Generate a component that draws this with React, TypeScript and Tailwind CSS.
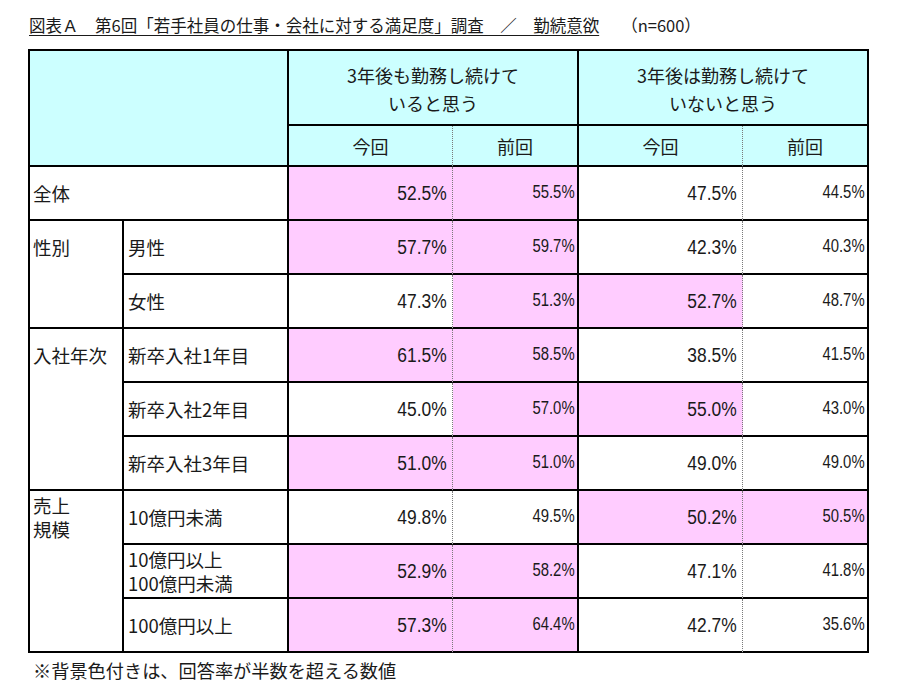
import React from "react";

const jp = "font-['Noto_Sans_CJK_JP',sans-serif]";
const num = "font-['Liberation_Sans',sans-serif]";

const P = true;
const W = false;

function NumCell({ v, pink, kind }: { v: string; pink: boolean; kind: "now" | "prev" }) {
  const bg = pink ? "bg-[#ffccff]" : "bg-white";
  if (kind === "now") {
    return (
      <div className={`${bg} border-b-2 border-b-black border-r border-r-[#7a7a7a] border-dotted [border-bottom-style:solid] flex items-center justify-end pr-[5px]`}>
        <span className={`${num} inline-block origin-right scale-x-[0.87] text-[20px] leading-none text-[#1a1a1a]`}>{v}</span>
      </div>
    );
  }
  return (
    <div className={`${bg} border-b-2 border-r-2 border-black flex items-center justify-end pr-[2px]`}>
      <span className={`${num} inline-block origin-right scale-x-[0.85] text-[17.5px] leading-none text-[#1a1a1a]`}>{v}</span>
    </div>
  );
}

function Vals({ vals }: { vals: [string, boolean][] }) {
  return (
    <>
      <NumCell v={vals[0][0]} pink={vals[0][1]} kind="now" />
      <NumCell v={vals[1][0]} pink={vals[1][1]} kind="prev" />
      <NumCell v={vals[2][0]} pink={vals[2][1]} kind="now" />
      <NumCell v={vals[3][0]} pink={vals[3][1]} kind="prev" />
    </>
  );
}

function SubLabel({ children }: { children: React.ReactNode }) {
  return (
    <div className={`border-b-2 border-r-2 border-black bg-white flex items-center pl-[4px] ${jp} text-[18.5px] leading-[24px] text-[#1a1a1a]`}>
      {children}
    </div>
  );
}

function GroupLabel({ span, children }: { span: "row-span-2" | "row-span-3"; children: React.ReactNode }) {
  return (
    <div className={`${span} border-b-2 border-r-2 border-black bg-white`}>
      <div className={`h-[52px] flex items-center pl-[3px] ${jp} text-[18.5px] leading-[24px] text-[#1a1a1a]`}>{children}</div>
    </div>
  );
}

export default function App() {
  return (
    <div className="w-[903px] h-[691px] bg-white overflow-hidden">
      <div className={`pt-[15px] pl-[29px] flex items-center h-[35px] ${jp} text-[16.5px] leading-[20px] text-[#1a1a1a]`}>
        <span className="underline underline-offset-[3px] decoration-[1px]">図表Ａ　第6回「若手社員の仕事・会社に対する満足度」調査　／　勤続意欲</span>
        <span className="ml-[22px]">（n=600）</span>
      </div>

      <div className="mt-[14px] ml-[28px] w-[841px] border-t-2 border-l-2 border-black grid grid-cols-[94px_165px_164px_126px_164px_126px] grid-rows-[75px_41px_repeat(9,54px)]">
        <div className="col-span-2 row-span-2 bg-[#ccffff] border-b-2 border-r-2 border-black" />
        <div className={`col-span-2 bg-[#ccffff] border-b-2 border-r-2 border-black flex flex-col items-center justify-center pt-[2px] ${jp} text-[18px] leading-[28px] text-[#1a1a1a]`}>
          <span>3年後も勤務し続けて</span>
          <span>いると思う</span>
        </div>
        <div className={`col-span-2 bg-[#ccffff] border-b-2 border-r-2 border-black flex flex-col items-center justify-center pt-[2px] ${jp} text-[18px] leading-[28px] text-[#1a1a1a]`}>
          <span>3年後は勤務し続けて</span>
          <span>いないと思う</span>
        </div>
        <div className={`bg-[#ccffff] border-b-2 border-b-black border-r border-r-[#7a7a7a] border-dotted [border-bottom-style:solid] flex items-center justify-center ${jp} text-[18px] leading-[24px] text-[#1a1a1a]`}>今回</div>
        <div className={`bg-[#ccffff] border-b-2 border-r-2 border-black flex items-center justify-center ${jp} text-[18px] leading-[24px] text-[#1a1a1a]`}>前回</div>
        <div className={`bg-[#ccffff] border-b-2 border-b-black border-r border-r-[#7a7a7a] border-dotted [border-bottom-style:solid] flex items-center justify-center ${jp} text-[18px] leading-[24px] text-[#1a1a1a]`}>今回</div>
        <div className={`bg-[#ccffff] border-b-2 border-r-2 border-black flex items-center justify-center ${jp} text-[18px] leading-[24px] text-[#1a1a1a]`}>前回</div>

        <div className={`col-span-2 border-b-2 border-r-2 border-black bg-white flex items-center pl-[3px] ${jp} text-[18.5px] leading-[24px] text-[#1a1a1a]`}>全体</div>
        <Vals vals={[["52.5%", P], ["55.5%", P], ["47.5%", W], ["44.5%", W]]} />

        <GroupLabel span="row-span-2">性別</GroupLabel>
        <SubLabel>男性</SubLabel>
        <Vals vals={[["57.7%", P], ["59.7%", P], ["42.3%", W], ["40.3%", W]]} />
        <SubLabel>女性</SubLabel>
        <Vals vals={[["47.3%", W], ["51.3%", P], ["52.7%", P], ["48.7%", W]]} />

        <GroupLabel span="row-span-3">入社年次</GroupLabel>
        <SubLabel>新卒入社1年目</SubLabel>
        <Vals vals={[["61.5%", P], ["58.5%", P], ["38.5%", W], ["41.5%", W]]} />
        <SubLabel>新卒入社2年目</SubLabel>
        <Vals vals={[["45.0%", W], ["57.0%", P], ["55.0%", P], ["43.0%", W]]} />
        <SubLabel>新卒入社3年目</SubLabel>
        <Vals vals={[["51.0%", P], ["51.0%", P], ["49.0%", W], ["49.0%", W]]} />

        <GroupLabel span="row-span-3">
          <span>
            売上
            <br />
            規模
          </span>
        </GroupLabel>
        <SubLabel>10億円未満</SubLabel>
        <Vals vals={[["49.8%", W], ["49.5%", W], ["50.2%", P], ["50.5%", P]]} />
        <SubLabel>
          <span>
            10億円以上
            <br />
            100億円未満
          </span>
        </SubLabel>
        <Vals vals={[["52.9%", P], ["58.2%", P], ["47.1%", W], ["41.8%", W]]} />
        <SubLabel>100億円以上</SubLabel>
        <Vals vals={[["57.3%", P], ["64.4%", P], ["42.7%", W], ["35.6%", W]]} />
      </div>

      <div className={`mt-[5px] pl-[33px] ${jp} text-[18.2px] leading-[24px] text-[#1a1a1a]`}>※背景色付きは、回答率が半数を超える数値</div>
    </div>
  );
}
